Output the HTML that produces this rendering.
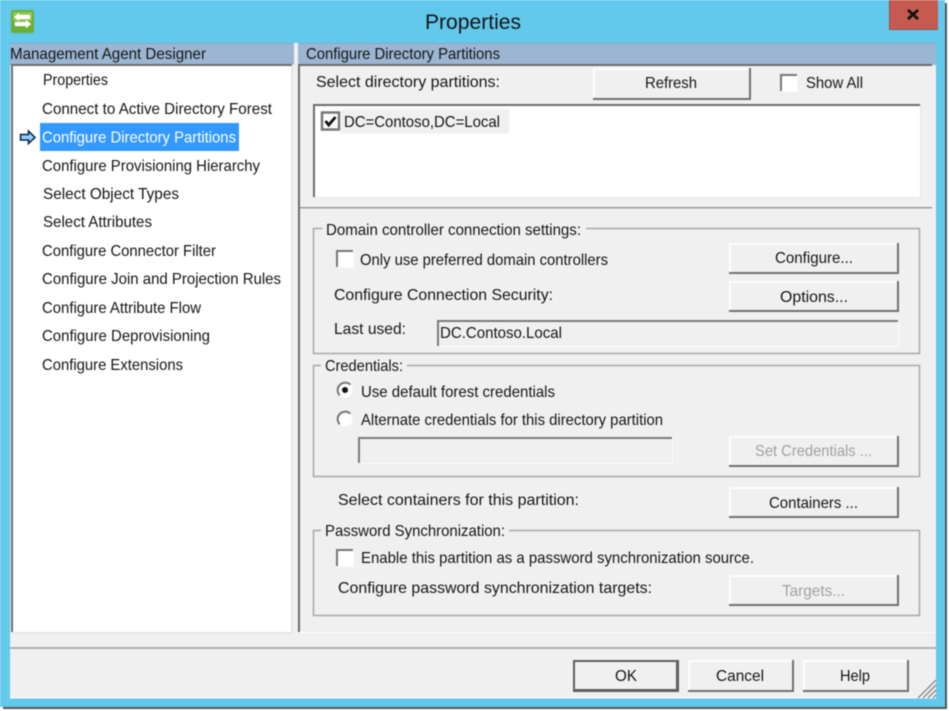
<!DOCTYPE html>
<html><head><meta charset="utf-8"><title>Properties</title>
<style>
html,body{margin:0;padding:0;background:#fff;width:949px;height:711px;overflow:hidden}
svg{display:block}
text{font-family:"Liberation Sans",sans-serif;font-size:16px;fill:#151515}
.g{fill:#a0a0a0}
</style></head><body>
<svg width="949" height="711" viewBox="0 0 949 711" xmlns="http://www.w3.org/2000/svg">
<defs>
<filter id="b" x="0" y="0" width="100%" height="100%" color-interpolation-filters="sRGB"><feGaussianBlur stdDeviation="0.4"/></filter>
</defs>
<rect width="949" height="711" fill="#fff"/>
<g filter="url(#b)">
<rect width="949" height="711" fill="#fff"/>
<rect x="3" y="3" width="944" height="706" fill="#555"/>
<rect width="945" height="707" fill="#62c8ec"/>
<!-- close -->
<rect x="889" y="0" width="49" height="29.500" fill="#c55a50"/>
<rect x="889" y="0" width="1" height="30" fill="#a0504a"/>
<rect x="889" y="29" width="49" height="1" fill="#a0504a"/>
<path d="M908 10l10 9M918 10l-10 9" stroke="#111" stroke-width="2.800" fill="none"/>
<!-- app icon -->
<rect x="11" y="10" width="23" height="23" rx="2" fill="#6cae38"/>
<rect x="13" y="12" width="19" height="9" fill="#8fc752"/>
<path d="M14 17l5-4v2h11v4H19v2zM31 24l-5-4v2H15v4h11v2z" fill="#fff" stroke="#eaf5d8" stroke-width=".5"/>
<!-- main surface -->
<rect x="10" y="43" width="926" height="655" fill="#f0f0f0"/>
<rect x="10" y="43" width="284" height="22" fill="#9bb5d2"/>
<rect x="298" y="43" width="638" height="22" fill="#9bb5d2"/>
<rect x="10" y="43" width="284" height="1" fill="#8aa6c2"/>
<rect x="298" y="43" width="638" height="1" fill="#8aa6c2"/>
<!-- left list -->
<rect x="11" y="64" width="282" height="569" fill="#fbfbfb"/>
<rect x="13" y="66" width="279" height="566" fill="#fff"/>
<rect x="11" y="64" width="281" height="2" fill="#6d6d6d"/>
<rect x="11" y="64" width="2" height="568" fill="#6d6d6d"/>
<rect x="291" y="66" width="2" height="566" fill="#e6e6e6"/>
<rect x="11" y="632" width="282" height="1.500" fill="#e4e4e4"/>
<rect x="40" y="123" width="199" height="28" fill="#3399ff"/>
<!-- arrow -->
<path d="M20.500 134.500h8v-3.500l6.500 6.500-6.500 6v-3.500h-8z" fill="#8fd0fa" stroke="#0d1b4a" stroke-width="1.500"/>
<!-- right pane -->
<rect x="298" y="64" width="634" height="2" fill="#6d6d6d"/>
<rect x="298" y="64" width="2" height="568" fill="#6d6d6d"/>
<rect x="300" y="207" width="632" height="1.500" fill="#9a9a9a"/>
<rect x="300" y="632" width="636" height="1" fill="#fafafa"/>
<rect x="10" y="647" width="926" height="2" fill="#b0b0b0"/>
<rect x="10" y="697" width="926" height="1.500" fill="#fafafa"/>
<!-- listbox -->
<rect x="313" y="104" width="608" height="94" fill="#e6e6e6"/>
<rect x="315" y="106" width="605" height="91" fill="#fff"/>
<rect x="313" y="104" width="607" height="2" fill="#6d6d6d"/>
<rect x="313" y="104" width="2" height="93" fill="#6d6d6d"/>
<rect x="341" y="109" width="168" height="24.500" fill="#f0f0f0"/>
<rect x="322" y="112.500" width="17" height="17" fill="#fff" stroke="#777" stroke-width="2.500"/>
<path d="M325.500 121l3.200 4 6.800-8" stroke="#111" stroke-width="2.800" fill="none"/>
<!-- group boxes -->
<rect x="313.500" y="228.500" width="606" height="125" fill="none" stroke="#a8a8a8" stroke-width="1.500"/>
<rect x="322" y="222" width="264" height="14" fill="#f0f0f0"/>
<rect x="313.500" y="365.500" width="606" height="111" fill="none" stroke="#a8a8a8" stroke-width="1.500"/>
<rect x="321" y="358" width="86" height="14" fill="#f0f0f0"/>
<rect x="313.500" y="530.500" width="606" height="85" fill="none" stroke="#a8a8a8" stroke-width="1.500"/>
<rect x="321" y="523" width="188" height="14" fill="#f0f0f0"/>
<!-- buttons -->
<g fill="#f0f0f0" stroke="none">
<path d="M593 68h158v32H593z" fill="#707070"/><path d="M593 68h156v30H593z" fill="#fcfcfc"/><rect x="595" y="70" width="154" height="28" fill="#f0f0f0"/>
<path d="M729 243h170v31H729z" fill="#707070"/><path d="M729 243h168v29H729z" fill="#fcfcfc"/><rect x="731" y="245" width="166" height="27" fill="#f0f0f0"/>
<path d="M729 281h170v31H729z" fill="#707070"/><path d="M729 281h168v29H729z" fill="#fcfcfc"/><rect x="731" y="283" width="166" height="27" fill="#f0f0f0"/>
<path d="M729 436h170v31H729z" fill="#707070"/><path d="M729 436h168v29H729z" fill="#fcfcfc"/><rect x="731" y="438" width="166" height="27" fill="#f0f0f0"/>
<path d="M729 487h170v31H729z" fill="#707070"/><path d="M729 487h168v29H729z" fill="#fcfcfc"/><rect x="731" y="489" width="166" height="27" fill="#f0f0f0"/>
<path d="M729 575h170v31H729z" fill="#707070"/><path d="M729 575h168v29H729z" fill="#fcfcfc"/><rect x="731" y="577" width="166" height="27" fill="#f0f0f0"/>
<rect x="573" y="660" width="106" height="32" fill="#5f5f5f"/><rect x="575" y="662" width="101" height="27" fill="#f0f0f0"/>
<path d="M688 660h106v32H688z" fill="#707070"/><path d="M688 660h104v30H688z" fill="#fcfcfc"/><rect x="690" y="662" width="102" height="28" fill="#f0f0f0"/>
<path d="M803 660h106v32H803z" fill="#707070"/><path d="M803 660h104v30H803z" fill="#fcfcfc"/><rect x="805" y="662" width="102" height="28" fill="#f0f0f0"/>
</g>
<!-- fields -->
<rect x="437" y="320" width="462" height="27" fill="#fafafa"/>
<rect x="439" y="322" width="459" height="24" fill="#f0f0f0"/>
<rect x="437" y="320" width="461" height="2" fill="#7a7a7a"/>
<rect x="437" y="320" width="2" height="26" fill="#7a7a7a"/>
<rect x="358" y="437" width="315" height="27" fill="#fafafa"/>
<rect x="360" y="439" width="312" height="24" fill="#f0f0f0"/>
<rect x="358" y="437" width="314" height="2" fill="#7a7a7a"/>
<rect x="358" y="437" width="2" height="26" fill="#7a7a7a"/>
<!-- checkboxes -->
<g>
<rect x="780" y="74" width="18" height="18" fill="#fafafa"/><rect x="782" y="76" width="15" height="15" fill="#fff"/><path d="M781 91V75h16" fill="none" stroke="#777" stroke-width="2"/>
<rect x="336" y="250" width="18" height="18" fill="#fafafa"/><rect x="338" y="252" width="15" height="15" fill="#fff"/><path d="M337 267V251h16" fill="none" stroke="#777" stroke-width="2"/>
<rect x="336" y="549" width="18" height="18" fill="#fafafa"/><rect x="338" y="551" width="15" height="15" fill="#fff"/><path d="M337 566V550h16" fill="none" stroke="#777" stroke-width="2"/>
</g>
<!-- radios -->
<circle cx="345" cy="390" r="7.500" fill="#fff"/>
<path d="M339.700 395.300a7.500 7.500 0 0 1 10.600-10.600" fill="none" stroke="#777" stroke-width="2"/>
<circle cx="345" cy="390" r="3" fill="#111"/>
<circle cx="345" cy="419" r="7.500" fill="#fff"/>
<path d="M339.700 424.300a7.500 7.500 0 0 1 10.600-10.600" fill="none" stroke="#777" stroke-width="2"/>
<!-- grip -->
<path d="M918 698l18-18M923 698l13-13M928 698l8-8M933 698l3-3" stroke="#8a8a8a" stroke-width="1.300" fill="none"/>
<!-- text -->
<g>
<text x="425" y="29" textLength="96" lengthAdjust="spacingAndGlyphs" style="font-size:21px">Properties</text>
<text x="10" y="59" textLength="196" lengthAdjust="spacingAndGlyphs">Management Agent Designer</text>
<text x="43" y="85" textLength="65" lengthAdjust="spacingAndGlyphs">Properties</text>
<text x="42" y="114" textLength="230" lengthAdjust="spacingAndGlyphs">Connect to Active Directory Forest</text>
<text x="42" y="142.500" textLength="194" lengthAdjust="spacingAndGlyphs" style="fill:#fff">Configure Directory Partitions</text>
<text x="42" y="171" textLength="218" lengthAdjust="spacingAndGlyphs">Configure Provisioning Hierarchy</text>
<text x="43" y="199" textLength="136" lengthAdjust="spacingAndGlyphs">Select Object Types</text>
<text x="43" y="227" textLength="109" lengthAdjust="spacingAndGlyphs">Select Attributes</text>
<text x="42" y="256" textLength="174" lengthAdjust="spacingAndGlyphs">Configure Connector Filter</text>
<text x="42" y="284" textLength="239" lengthAdjust="spacingAndGlyphs">Configure Join and Projection Rules</text>
<text x="42" y="313" textLength="159" lengthAdjust="spacingAndGlyphs">Configure Attribute Flow</text>
<text x="42" y="341" textLength="168" lengthAdjust="spacingAndGlyphs">Configure Deprovisioning</text>
<text x="42" y="370" textLength="141" lengthAdjust="spacingAndGlyphs">Configure Extensions</text>
<text x="306" y="59" textLength="194" lengthAdjust="spacingAndGlyphs">Configure Directory Partitions</text>
<text x="316" y="87" textLength="184" lengthAdjust="spacingAndGlyphs">Select directory partitions:</text>
<text x="645" y="88" textLength="52" lengthAdjust="spacingAndGlyphs">Refresh</text>
<text x="806" y="88" textLength="57" lengthAdjust="spacingAndGlyphs">Show All</text>
<text x="344" y="127" textLength="156" lengthAdjust="spacingAndGlyphs">DC=Contoso,DC=Local</text>
<text x="326" y="235" textLength="255" lengthAdjust="spacingAndGlyphs">Domain controller connection settings:</text>
<text x="360" y="265" textLength="248" lengthAdjust="spacingAndGlyphs">Only use preferred domain controllers</text>
<text x="775" y="263" textLength="78" lengthAdjust="spacingAndGlyphs">Configure...</text>
<text x="334" y="300" textLength="219" lengthAdjust="spacingAndGlyphs">Configure Connection Security:</text>
<text x="780" y="302" textLength="68" lengthAdjust="spacingAndGlyphs">Options...</text>
<text x="334" y="334" textLength="72" lengthAdjust="spacingAndGlyphs">Last used:</text>
<text x="440" y="338" textLength="122" lengthAdjust="spacingAndGlyphs">DC.Contoso.Local</text>
<text x="325" y="371" textLength="78" lengthAdjust="spacingAndGlyphs">Credentials:</text>
<text x="361" y="397" textLength="194" lengthAdjust="spacingAndGlyphs">Use default forest credentials</text>
<text x="361" y="425" textLength="302" lengthAdjust="spacingAndGlyphs">Alternate credentials for this directory partition</text>
<text class="g" x="755" y="456" textLength="117" lengthAdjust="spacingAndGlyphs">Set Credentials ...</text>
<text x="338" y="505" textLength="241" lengthAdjust="spacingAndGlyphs">Select containers for this partition:</text>
<text x="769" y="508" textLength="89" lengthAdjust="spacingAndGlyphs">Containers ...</text>
<text x="325" y="536" textLength="180" lengthAdjust="spacingAndGlyphs">Password Synchronization:</text>
<text x="361" y="563" textLength="393" lengthAdjust="spacingAndGlyphs">Enable this partition as a password synchronization source.</text>
<text x="338" y="593" textLength="314" lengthAdjust="spacingAndGlyphs">Configure password synchronization targets:</text>
<text class="g" x="782" y="596" textLength="63" lengthAdjust="spacingAndGlyphs">Targets...</text>
<text x="615" y="681" textLength="22" lengthAdjust="spacingAndGlyphs">OK</text>
<text x="716" y="681" textLength="48" lengthAdjust="spacingAndGlyphs">Cancel</text>
<text x="840" y="681" textLength="30" lengthAdjust="spacingAndGlyphs">Help</text>
</g>
</g>
</svg>
</body></html>
